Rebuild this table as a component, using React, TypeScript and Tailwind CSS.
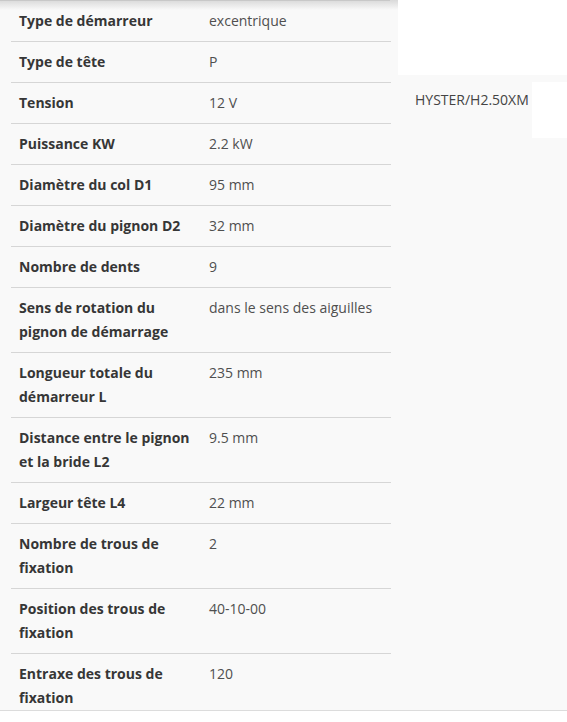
const rows: [string, string][] = [
  ["Type de démarreur", "excentrique"],
  ["Type de tête", "P"],
  ["Tension", "12 V"],
  ["Puissance KW", "2.2 kW"],
  ["Diamètre du col D1", "95 mm"],
  ["Diamètre du pignon D2", "32 mm"],
  ["Nombre de dents", "9"],
  ["Sens de rotation du pignon de démarrage", "dans le sens des aiguilles"],
  ["Longueur totale du démarreur L", "235 mm"],
  ["Distance entre le pignon et la bride L2", "9.5 mm"],
  ["Largeur tête L4", "22 mm"],
  ["Nombre de trous de fixation", "2"],
  ["Position des trous de fixation", "40-10-00"],
  ["Entraxe des trous de fixation", "120"],
];

export default function App() {
  return (
    <div className="w-[567px] bg-white font-['Open_Sans',sans-serif] text-[14px] leading-[24px]">
      <div className="flex h-[711px] border-b border-[#dcdcdc] bg-[#f9f9f9]">
        {/* spec table */}
        <div className="relative w-[398px] overflow-hidden px-[11px] pt-px">
          <div className="pointer-events-none absolute inset-x-0 top-0 h-[10px] bg-gradient-to-b from-[#d9d9d9] to-[#f9f9f9]" />
          <div className="pointer-events-none absolute left-0 top-0 h-px w-[390px] bg-[#c8c8c8]" />
          <div className="relative w-[380px]">
            {rows.map(([label, value], i) => (
              <div
                key={i}
                className={`grid grid-cols-[198px_1fr] py-[8px] ${
                  i < rows.length - 1 ? "border-b border-[#d6d6d6]" : ""
                }`}
              >
                <div className="pl-[8px] pr-[8px] font-bold text-[#363636]">{label}</div>
                <div className="pr-[8px] text-[#4f4f4f]">{value}</div>
              </div>
            ))}
          </div>
        </div>

        {/* side column */}
        <div className="flex flex-1 flex-col">
          <div className="h-[75px] bg-white" />
          <div className="flex pt-[7px]">
            <div className="flex-1 pl-[17px] pt-[6px] text-[#444]">HYSTER/H2.50XM</div>
            <div className="h-[56px] w-[35px] bg-white" />
          </div>
        </div>
      </div>
      <div className="h-[10px] bg-white" />
    </div>
  );
}
